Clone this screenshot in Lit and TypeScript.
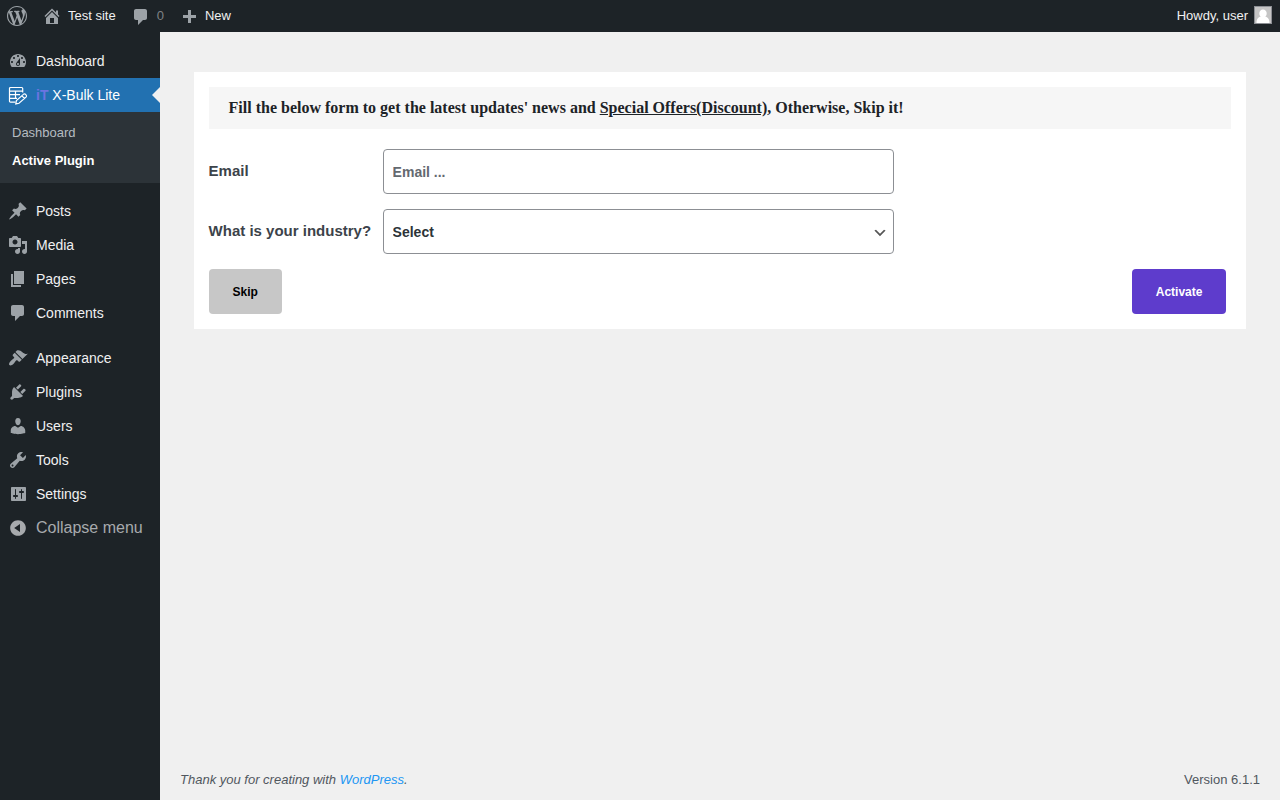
import { LitElement, html, css, svg, nothing } from "lit";
import { customElement, property } from "lit/decorators.js";

const ICONS: Record<string, string> = {
  wordpress:
    "M20 10c0-5.51-4.49-10-10-10C4.48 0 0 4.49 0 10c0 5.52 4.48 10 10 10 5.51 0 10-4.48 10-10zM7.78 15.37L4.37 6.22c.55-.02 1.17-.08 1.17-.08.5-.06.44-1.13-.06-1.11 0 0-1.45.11-2.37.11-.18 0-.37 0-.58-.01C4.12 2.69 6.87 1.11 10 1.11c2.33 0 4.45.87 6.05 2.34-.68-.11-1.65.39-1.65 1.58 0 .74.45 1.36.9 2.1.35.61.55 1.36.55 2.46 0 1.49-1.4 5-1.4 5l-3.03-8.37c.54-.02.82-.17.82-.17.5-.05.44-1.25-.06-1.22 0 0-1.44.12-2.38.12-.87 0-2.33-.12-2.33-.12-.5-.03-.56 1.2-.06 1.22l.92.08 1.26 3.41zM17.41 10c.24-.64.74-1.87.43-4.25.7 1.29 1.05 2.71 1.05 4.25 0 3.29-1.73 6.24-4.4 7.78.97-2.59 1.94-5.2 2.92-7.78zM6.1 18.09C3.12 16.65 1.11 13.53 1.11 10c0-1.3.23-2.48.72-3.59C3.25 10.3 4.67 14.2 6.1 18.09zm4.03-6.63l2.58 6.98c-.86.29-1.76.45-2.71.45-.79 0-1.57-.11-2.29-.33.81-2.38 1.62-4.74 2.42-7.1z",
  home: "M16 8.5l1.53 1.53-1.06 1.06L10 4.6l-6.47 6.49-1.06-1.06L10 2.5l4 4v-2h2v4zm-6-2.46l6 5.99V18H4v-5.97zM12 17v-5H8v5h4z",
  comments:
    "M5 2h9c1.1 0 2 .9 2 2v7c0 1.1-.9 2-2 2h-2l-5 5v-5H5c-1.1 0-2-.9-2-2V4c0-1.1.9-2 2-2z",
  plus: "M17 7v3h-5v5H9v-5H4V7h5V2h3v5h5z",
  dashboard:
    "M3.76 16h12.48c1.1-1.37 1.76-3.11 1.76-5 0-4.42-3.58-8-8-8s-8 3.58-8 8c0 1.89.66 3.63 1.76 5zM10 4c.55 0 1 .45 1 1s-.45 1-1 1-1-.45-1-1 .45-1 1-1zM6 6c.55 0 1 .45 1 1s-.45 1-1 1-1-.45-1-1 .45-1 1-1zm8 0c.55 0 1 .45 1 1s-.45 1-1 1-1-.45-1-1 .45-1 1-1zm-5.37 5.55L12 7v6c0 1.1-.9 2-2 2s-2-.9-2-2c0-.57.24-1.08.63-1.45zM4 10c.55 0 1 .45 1 1s-.45 1-1 1-1-.45-1-1 .45-1 1-1zm12 0c.55 0 1 .45 1 1s-.45 1-1 1-1-.45-1-1 .45-1 1-1zm-5 3c0-.55-.45-1-1-1s-1 .45-1 1 .45 1 1 1 1-.45 1-1z",
  posts:
    "M10.44 3.02l1.82-1.82 6.36 6.35-1.83 1.82c-1.05-.68-2.48-.57-3.41.36l-.75.75c-.92.93-1.04 2.35-.35 3.41l-1.83 1.82-2.41-2.41-2.8 2.79c-.42.42-3.38 2.71-3.8 2.29s1.86-3.39 2.28-3.81l2.79-2.79L4.1 9.36l1.83-1.82c1.05.69 2.48.57 3.4-.36l.75-.75c.93-.92 1.05-2.35.36-3.41z",
  media:
    "M13 11V4c0-.55-.45-1-1-1h-1.67L9 1H5L3.67 3H2c-.55 0-1 .45-1 1v7c0 .55.45 1 1 1h10c.55 0 1-.45 1-1zM7 4.5c1.38 0 2.5 1.12 2.5 2.5S8.38 9.5 7 9.5 4.5 8.38 4.5 7 5.62 4.5 7 4.5zM14 6h5v10.5c0 1.38-1.12 2.5-2.5 2.5S14 17.88 14 16.5s1.12-2.5 2.5-2.5c.17 0 .34.02.5.05V9h-3V6zm-4 8.05V13h2v3.5c0 1.38-1.12 2.5-2.5 2.5S7 17.88 7 16.5 8.12 14 9.5 14c.17 0 .34.02.5.05z",
  pages: "M6 15V2h10v13H6zm-1 1h8v2H3V5h2v11z",
  appearance:
    "M14.48 11.06L7.41 3.99l1.5-1.5c.5-.56 2.3-.47 3.51.32 1.21.8 1.43 1.28 2.91 2.1 1.18.64 2.45 1.26 4.45.85zm-.71.71L6.7 4.7 4.93 6.47c-.39.39-.39 1.02 0 1.41l1.06 1.06c.39.39.39 1.03 0 1.42-.6.6-1.43 1.11-2.21 1.69-.35.26-.7.53-1.01.84C1.43 14.23.4 16.08 1.4 17.07c.99 1 2.84-.03 4.18-1.36.31-.31.58-.66.85-1.02.57-.78 1.08-1.61 1.69-2.21.39-.39 1.02-.39 1.41 0l1.06 1.06c.39.39 1.02.39 1.41 0z",
  plugins:
    "M13.11 4.36L9.87 7.6 8 5.73l3.24-3.24c.35-.34 1.05-.2 1.56.32.52.51.66 1.21.31 1.55zm-8 1.77l.91-1.12 9.01 9.01-1.19.84c-.71.71-2.63 1.16-3.82 1.16H6.14L4.9 17.26c-.59.59-1.54.59-2.12 0-.59-.58-.59-1.53 0-2.12l1.24-1.24v-3.88c0-1.13.4-3.19 1.09-3.89zm7.26 3.97l3.24-3.24c.34-.35 1.04-.21 1.55.31.52.51.66 1.21.31 1.55l-3.24 3.25z",
  users:
    "M10 9.25c-2.27 0-2.73-3.44-2.73-3.44C7 4.02 7.82 2 9.97 2c2.16 0 2.98 2.02 2.71 3.81 0 0-.41 3.44-2.68 3.44zm0 2.57L12.72 10c2.39 0 4.52 2.33 4.52 4.53v2.49s-3.65 1.13-7.24 1.13c-3.65 0-7.24-1.13-7.24-1.13v-2.49c0-2.25 1.94-4.48 4.47-4.48z",
  tools:
    "M16.68 9.77c-1.34 1.34-3.3 1.67-4.95.99l-5.41 6.52c-.99.99-2.59.99-3.58 0s-.99-2.59 0-3.57l6.52-5.42c-.68-1.65-.35-3.61.99-4.95 1.28-1.28 3.12-1.62 4.72-1.06l-2.89 2.89 2.82 2.82 2.86-2.87c.53 1.58.18 3.39-1.08 4.65zM3.81 16.21c.4.39 1.04.39 1.43 0 .4-.4.4-1.04 0-1.43-.39-.4-1.03-.4-1.43 0-.39.39-.39 1.03 0 1.43z",
  settings:
    "M18 16V4c0-.55-.45-1-1-1H4c-.55 0-1 .45-1 1v12c0 .55.45 1 1 1h13c.55 0 1-.45 1-1zM8 11h1c.55 0 1 .45 1 1s-.45 1-1 1H8v1.500c0 .28-.22.5-.5.5s-.5-.22-.5-.5V13H6c-.55 0-1-.45-1-1s.45-1 1-1h1V5.500c0-.28.22-.5.5-.5s.5.22.5.5V11zm5-2h-1c-.55 0-1-.45-1-1s.45-1 1-1h1V5.500c0-.28.22-.5.5-.5s.5.22.5.5V7h1c.55 0 1 .45 1 1s-.45 1-1 1h-1v5.500c0 .28-.22.5-.5.5s-.5-.22-.5-.5V9z",
  collapse:
    "M10 2.16c4.33 0 7.84 3.51 7.84 7.84s-3.51 7.84-7.84 7.84S2.16 14.33 2.16 10 5.71 2.16 10 2.16zm2 11.72V6.12L6.18 9.97z",
};

@customElement("wp-icon")
export class WpIcon extends LitElement {
  @property() name = "";

  static styles = css`
    :host {
      display: block;
      flex: none;
      width: 20px;
      height: 20px;
    }
    svg {
      display: block;
      width: 100%;
      height: 100%;
    }
  `;

  render() {
    if (this.name === "bulk") {
      return html`<svg viewBox="0 0 20 20" fill="none" stroke="currentColor" stroke-width="1.200" aria-hidden="true">
        ${svg`<path d="M7.500 17.200H2.500a1 1 0 0 1-1-1V3.500a1 1 0 0 1 1-1h11.200a1 1 0 0 1 1 1V7.500"/>
        <path d="M1.500 6.200H14.700M1.500 9.700h10.500M1.500 13.400h7.500M7.500 6.200v7.200"/>
        <path d="M7.800 18.900l.6-3.300 7-6.200a1.500 1.500 0 0 1 2.200 0l.4.500a1.500 1.500 0 0 1 0 2.200l-7 6.200zM14 10.800l2.500 2.700"/>`}
      </svg>`;
    }
    return html`<svg viewBox="0 0 20 20" fill="currentColor" fill-rule="evenodd" aria-hidden="true">
      <path d=${ICONS[this.name] ?? ""}></path>
    </svg>`;
  }
}

interface MenuEntry {
  icon: string;
  label: string;
  gap?: boolean;
}

const MENU: MenuEntry[] = [
  { icon: "posts", label: "Posts", gap: true },
  { icon: "media", label: "Media" },
  { icon: "pages", label: "Pages" },
  { icon: "comments", label: "Comments" },
  { icon: "appearance", label: "Appearance", gap: true },
  { icon: "plugins", label: "Plugins" },
  { icon: "users", label: "Users" },
  { icon: "tools", label: "Tools" },
  { icon: "settings", label: "Settings" },
];

@customElement("admin-bar")
export class AdminBar extends LitElement {
  static styles = css`
    :host {
      display: flex;
      align-items: center;
      justify-content: space-between;
      height: 32px;
      padding: 0 8px 0 7px;
      background: #1d2327;
      color: #f0f0f1;
      font-size: 13px;
      line-height: 32px;
    }
    nav {
      display: flex;
      gap: 15px;
    }
    a {
      display: flex;
      align-items: center;
      gap: 6px;
      color: inherit;
      text-decoration: none;
    }
    wp-icon {
      color: #9ca2a7;
    }
    .low wp-icon {
      margin-top: 2px;
    }
    .lower wp-icon {
      margin-top: 4px;
    }
    .count {
      color: #a7aaad;
      opacity: 0.7;
    }
    .avatar {
      display: block;
      width: 18px;
      height: 18px;
      margin-bottom: 2px;
    }
  `;

  render() {
    return html`
      <nav aria-label="Toolbar">
        <a href="#" aria-label="About WordPress"><wp-icon name="wordpress"></wp-icon></a>
        <a href="#"><wp-icon name="home"></wp-icon>Test site</a>
        <a href="#" class="low"><wp-icon name="comments"></wp-icon><span class="count">0</span></a>
        <a href="#" class="lower"><wp-icon name="plus"></wp-icon>New</a>
      </nav>
      <a href="#">
        Howdy, user
        <svg class="avatar" viewBox="0 0 18 18" aria-hidden="true">
          <rect width="18" height="18" fill="#8c8f94" />
          <rect x="1" y="1" width="16" height="16" fill="#c5c5c5" />
          <path
            fill="#fff"
            d="M9 3.500a3.700 3.700 0 0 1 3.700 3.900c0 1.500-.7 2.500-1.500 3.200 2.500.5 4.300 2.400 4.300 6.400h-13c0-4 1.800-5.900 4.300-6.400-.8-.7-1.500-1.700-1.500-3.200A3.700 3.700 0 0 1 9 3.500z"
          />
        </svg>
      </a>
    `;
  }
}

@customElement("admin-menu")
export class AdminMenu extends LitElement {
  static styles = css`
    :host {
      display: block;
      padding-top: 12px;
      background: #1d2327;
      color: #f0f0f1;
      font-size: 14px;
      line-height: 18px;
    }
    ul {
      margin: 0;
      padding: 0;
      list-style: none;
    }
    .item,
    .collapse {
      display: flex;
      align-items: center;
      gap: 8px;
      box-sizing: border-box;
      width: 100%;
      height: 34px;
      padding: 0 8px;
      color: inherit;
      text-decoration: none;
    }
    .gap {
      margin-top: 11px;
    }
    wp-icon {
      color: #9ca2a7;
    }
    .current {
      position: relative;
      background: #2271b1;
      color: #fff;
    }
    .current wp-icon {
      color: #fff;
    }
    .current::after {
      content: "";
      position: absolute;
      right: 0;
      top: 9px;
      border: 8px solid transparent;
      border-left-width: 0;
      border-right-color: #f0f0f1;
    }
    .brand {
      color: #6b74e0;
      font-weight: bold;
    }
    .sub {
      padding: 7px 0 8px;
      background: #2c3338;
      font-size: 13px;
    }
    .sub a {
      display: block;
      padding: 5px 12px;
      color: #b5bcc1;
      text-decoration: none;
    }
    .sub .active {
      color: #fff;
      font-weight: 600;
    }
    .collapse {
      border: 0;
      background: none;
      color: #a7aaad;
      font-family: inherit;
      font-size: 16px;
    }
    .collapse wp-icon {
      color: #a7aaad;
    }
  `;

  render() {
    return html`
      <nav aria-label="Main menu">
        <ul>
          <li><a class="item" href="#"><wp-icon name="dashboard"></wp-icon>Dashboard</a></li>
          <li>
            <a class="item current" href="#"
              ><wp-icon name="bulk"></wp-icon><span><span class="brand">iT</span> X-Bulk Lite</span></a
            >
            <ul class="sub">
              <li><a href="#">Dashboard</a></li>
              <li><a class="active" href="#" aria-current="page">Active Plugin</a></li>
            </ul>
          </li>
          ${MENU.map(
            (m) => html`<li class=${m.gap ? "gap" : nothing}>
              <a class="item" href="#"><wp-icon name=${m.icon}></wp-icon>${m.label}</a>
            </li>`,
          )}
          <li>
            <button class="collapse" type="button"><wp-icon name="collapse"></wp-icon>Collapse menu</button>
          </li>
        </ul>
      </nav>
    `;
  }
}

@customElement("activation-form")
export class ActivationForm extends LitElement {
  static styles = css`
    :host {
      display: block;
      padding: 15px;
      background: #fff;
    }
    h1 {
      margin: 0 0 20px;
      padding: 10px 20px;
      background: #f6f6f6;
      color: #1d2327;
      font: bold 16px/22px "Liberation Serif", serif;
    }
    .row {
      display: grid;
      grid-template-columns: 164px 50%;
      align-items: center;
      gap: 10px;
      margin-bottom: 15px;
    }
    label {
      padding-bottom: 2px;
      color: #3c434a;
      font-size: 15px;
      font-weight: 600;
      line-height: 20px;
      white-space: nowrap;
    }
    input,
    select {
      box-sizing: border-box;
      width: 100%;
      height: 45px;
      margin: 0;
      padding: 0 9px;
      border: 1px solid #8c8f94;
      border-radius: 4px;
      background: #fff;
      color: #2c3338;
      font-family: inherit;
      font-size: 14px;
      font-weight: 600;
    }
    input::placeholder {
      color: #646970;
      opacity: 1;
    }
    select {
      appearance: none;
      padding-right: 24px;
      background: #fff
        url("data:image/svg+xml,%3Csvg xmlns='http://www.w3.org/2000/svg' viewBox='0 0 20 20'%3E%3Cpath d='M5 6l5 5 5-5 2 1-7 7-7-7 2-1z' fill='%23555'/%3E%3C/svg%3E")
        no-repeat right 5px top 55% / 16px 16px;
    }
    .actions {
      display: flex;
      justify-content: space-between;
      padding-right: 5px;
    }
    button {
      height: 45px;
      padding: 0 24px;
      border: 0;
      border-radius: 4px;
      font-family: inherit;
      font-size: 12px;
      font-weight: 600;
    }
    .skip {
      background: #c7c7c7;
      color: #000;
    }
    .activate {
      background: #5e3ccc;
      color: #fff;
    }
  `;

  render() {
    return html`
      <form>
        <h1>
          Fill the below form to get the latest updates' news and <u>Special Offers(Discount)</u>, Otherwise, Skip it!
        </h1>
        <div class="row">
          <label for="email">Email</label>
          <input id="email" type="email" placeholder="Email ..." />
        </div>
        <div class="row">
          <label for="industry">What is your industry?</label>
          <select id="industry">
            <option>Select</option>
          </select>
        </div>
        <div class="actions">
          <button class="skip" type="button">Skip</button>
          <button class="activate" type="button">Activate</button>
        </div>
      </form>
    `;
  }
}

@customElement("app-root")
export class AppRoot extends LitElement {
  static styles = css`
    :host {
      display: flex;
      flex-direction: column;
      min-height: 100vh;
      background: #f0f0f0;
      font-family: "Liberation Sans", Arial, sans-serif;
    }
    .layout {
      display: grid;
      grid-template-columns: 160px 1fr;
      flex: 1;
    }
    .content {
      display: flex;
      flex-direction: column;
      padding: 40px 0 10px;
    }
    main {
      flex: 1;
      padding: 0 3%;
    }
    footer {
      display: flex;
      justify-content: space-between;
      padding: 0 20px;
      color: #50575e;
      font-size: 13px;
      line-height: 20px;
    }
    footer a {
      color: #2196f3;
      text-decoration: none;
    }
  `;

  render() {
    return html`
      <admin-bar></admin-bar>
      <div class="layout">
        <admin-menu></admin-menu>
        <div class="content">
          <main><activation-form></activation-form></main>
          <footer>
            <em>Thank you for creating with <a href="#">WordPress</a>.</em>
            <span>Version 6.1.1</span>
          </footer>
        </div>
      </div>
    `;
  }
}
